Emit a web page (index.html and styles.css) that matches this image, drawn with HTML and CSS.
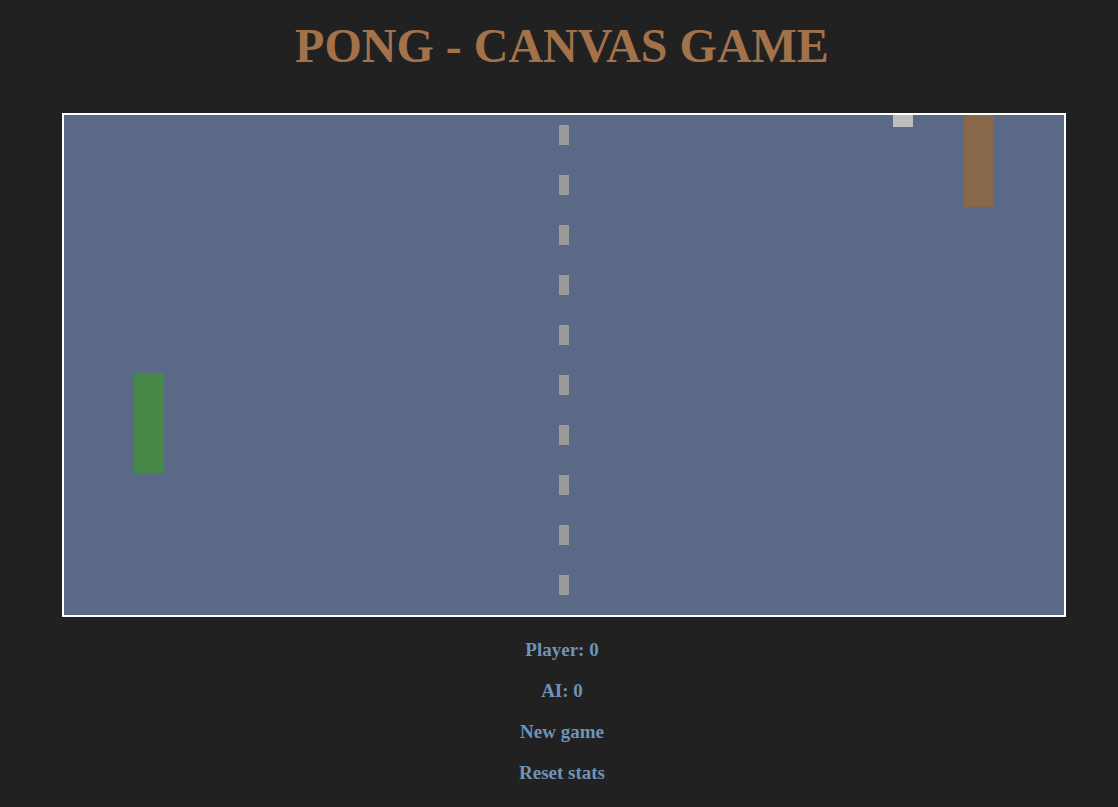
FILE: index.html
```html
<!DOCTYPE html>
<html>
<head>
<meta charset="utf-8">
<title>Pong - Canvas Game</title>
<link rel="stylesheet" href="styles.css">
</head>
<body>
<h1 class="title">PONG - CANVAS GAME</h1>
<div class="stage">
  <div class="board">
    <div class="net"></div>
    <div class="paddle paddle-player"></div>
    <div class="paddle paddle-ai"></div>
    <div class="ball"></div>
  </div>
</div>
<div class="info">
  <p class="line">Player: 0</p>
  <p class="line">AI: 0</p>
  <p class="line">New game</p>
  <p class="line">Reset stats</p>
</div>
</body>
</html>
```
FILE: styles.css
```css
html, body {
  background: #212121;
}
body {
  margin: 0;
  padding-top: 19px;
  font-family: "Liberation Serif", "Times New Roman", serif;
}
.title {
  margin: 0;
  padding-left: 6px;
  text-align: center;
  font-size: 48px;
  font-weight: bold;
  line-height: 53px;
  color: #a3714a;
}
.stage {
  margin-top: 41px;
  padding-left: 62px;
}
.board {
  position: relative;
  width: 1000px;
  height: 500px;
  border: 2px solid #ffffff;
  background: #5a6986;
  overflow: hidden;
}
.net {
  position: absolute;
  left: 495px;
  top: 10px;
  width: 10px;
  height: 480px;
  background: repeating-linear-gradient(to bottom, #9a9a9a 0 20px, transparent 20px 50px);
}
.paddle {
  position: absolute;
  width: 30px;
  height: 100px;
}
.paddle-player {
  left: 70px;
  top: 258px;
  background: #468846;
}
.paddle-ai {
  left: 900px;
  top: -8px;
  background: #88674a;
}
.ball {
  position: absolute;
  left: 829px;
  top: -8px;
  width: 20px;
  height: 20px;
  background: #bdbdbd;
}
.info {
  display: flex;
  flex-direction: column;
  align-items: center;
  gap: 19px;
  padding-top: 22px;
  padding-bottom: 20px;
  padding-left: 6px;
}
.line {
  margin: 0;
  font-size: 19px;
  font-weight: bold;
  line-height: 22px;
  color: #6d93b6;
}
```
